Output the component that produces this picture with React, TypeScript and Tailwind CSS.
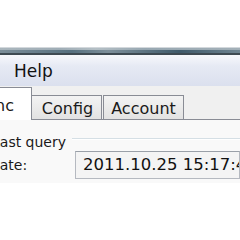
export default function App() {
  return (
    <div className="h-[240px] w-[240px] overflow-hidden bg-white font-['DejaVu_Sans',sans-serif] text-[#1a1a1a]">
      <div className="h-[47px]" />

      {/* window frame edge */}
      <div className="flex h-[8px] flex-col">
        <div className="h-[1px] bg-[#d3d8dc]" />
        <div className="h-[2px] bg-[linear-gradient(to_right,#aab6bd_0%,#9fadb6_25%,#b4bfc5_40%,#98a8b2_60%,#a3b0b8_100%)]" />
        <div className="h-[3px] bg-[linear-gradient(to_right,#7b8d98_0%,#56707f_30%,#7d8f9a_45%,#3f5a6a_75%,#6f8491_100%)]" />
        <div className="h-[2px] bg-[#3e4a52]" />
      </div>

      {/* menu bar */}
      <div className="flex h-[31px] items-center bg-[linear-gradient(to_bottom,#f7f8fc_0%,#e6eaf4_35%,#dbe0ee_100%)]">
        <span className="ml-[14px] text-[17px] leading-[20px] text-[#111]">Help</span>
      </div>

      {/* tab control */}
      <div className="bg-[#f0f0f0] pt-[1px]">
        <div className="flex h-[33px] items-end">
          <div className="flex h-[33px] w-[32px] items-start justify-end overflow-visible border-r border-t border-[#898c95] bg-white pr-[17px] pt-[9px]">
            <span className="whitespace-nowrap text-[16px] leading-[18px]">Sync</span>
          </div>
          <div className="flex h-[25px] w-[70px] items-start justify-center border-b border-r border-t border-[#898c95] bg-[linear-gradient(to_bottom,#f3f3f3,#e2e2e2)] pl-[2px] pt-[4px]">
            <span className="text-[16px] leading-[18px]">Config</span>
          </div>
          <div className="w-[1px] self-stretch border-b border-[#898c95]" />
          <div className="flex h-[25px] w-[81px] items-start justify-center border border-[#898c95] bg-[linear-gradient(to_bottom,#f3f3f3,#e2e2e2)] pt-[4px]">
            <span className="text-[16px] leading-[18px]">Account</span>
          </div>
          <div className="flex-1 self-stretch border-b border-[#898c95]" />
        </div>

        {/* panel */}
        <div className="h-[63px] bg-[#f9f9f9] pt-[14px]">
          <div className="flex items-start">
            <span className="-ml-[8px] whitespace-nowrap text-[14px] leading-[16px]">Last query</span>
            <div className="ml-[6px] mt-[4px] h-[2px] flex-1 border-t border-[#d5dfe5] bg-white" />
          </div>
          <div className="mt-[1px] flex items-center">
            <span className="-ml-[11px] w-[86px] whitespace-nowrap text-[14px] leading-[16px]">Date:</span>
            <div className="flex h-[28px] flex-1 items-center overflow-hidden whitespace-nowrap border border-[#b5b9c0] border-t-[#9aa0a8] bg-[#f4f4f4] pl-[7px]">
              <span className="text-[16.5px] leading-[18px] text-[#111]">2011.10.25 15:17:42</span>
            </div>
          </div>
        </div>
      </div>
    </div>
  );
}
